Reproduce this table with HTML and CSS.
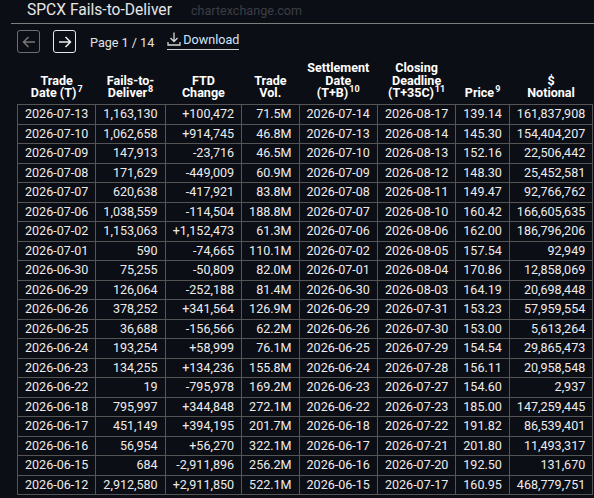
FILE: index.html
```html
<!DOCTYPE html>
<html lang="en">
<head>
    <meta charset="UTF-8">
    <meta name="viewport" content="width=device-width, initial-scale=1.0">
    <title>SPCX Fails-to-Deliver</title>
    <link rel="stylesheet" href="styles.css">
</head>
<body>

    <div class="title-bar">
        <h1>SPCX Fails-to-Deliver</h1>
        <span class="site">chartexchange.com</span>
    </div>

    <div class="toolbar">
        <button class="page-btn disabled">
            <svg width="14" height="12" viewBox="0 0 14 12"><path d="M13 6H1.5M6.5 1L1.5 6l5 5" fill="none" stroke="currentColor" stroke-width="1.5"/></svg>
        </button>
        <button class="page-btn">
            <svg width="14" height="12" viewBox="0 0 14 12"><path d="M1 6h11.5M7.5 1l5 5-5 5" fill="none" stroke="currentColor" stroke-width="1.5"/></svg>
        </button>
        <span class="page-info">Page 1 / 14</span>
        <a href="#" class="download">
            <svg width="14" height="14" viewBox="0 0 14 14"><path d="M7 0.5v9M3.5 6L7 9.5 10.5 6M1 10v3h12v-3" fill="none" stroke="currentColor" stroke-width="1.3"/></svg>Download
        </a>
    </div>

    <table class="ftd-table">
        <thead>
            <tr>
                <th>Trade<br>Date (T)<sup>7</sup></th>
                <th>Fails-to-<br>Deliver<sup>8</sup></th>
                <th>FTD<br>Change</th>
                <th>Trade<br>Vol.</th>
                <th>Settlement<br>Date<br>(T+B)<sup>10</sup></th>
                <th>Closing<br>Deadline<br>(T+35C)<sup>11</sup></th>
                <th>Price<sup>9</sup></th>
                <th>$<br>Notional</th>
            </tr>
        </thead>
        <tbody id="ftdRows"></tbody>
    </table>

    <script>
        const rows = [
            ['2026-07-13', '1,163,130', '+100,472', '71.5M', '2026-07-14', '2026-08-17', '139.14', '161,837,908'],
            ['2026-07-10', '1,062,658', '+914,745', '46.8M', '2026-07-13', '2026-08-14', '145.30', '154,404,207'],
            ['2026-07-09', '147,913', '-23,716', '46.5M', '2026-07-10', '2026-08-13', '152.16', '22,506,442'],
            ['2026-07-08', '171,629', '-449,009', '60.9M', '2026-07-09', '2026-08-12', '148.30', '25,452,581'],
            ['2026-07-07', '620,638', '-417,921', '83.8M', '2026-07-08', '2026-08-11', '149.47', '92,766,762'],
            ['2026-07-06', '1,038,559', '-114,504', '188.8M', '2026-07-07', '2026-08-10', '160.42', '166,605,635'],
            ['2026-07-02', '1,153,063', '+1,152,473', '61.3M', '2026-07-06', '2026-08-06', '162.00', '186,796,206'],
            ['2026-07-01', '590', '-74,665', '110.1M', '2026-07-02', '2026-08-05', '157.54', '92,949'],
            ['2026-06-30', '75,255', '-50,809', '82.0M', '2026-07-01', '2026-08-04', '170.86', '12,858,069'],
            ['2026-06-29', '126,064', '-252,188', '81.4M', '2026-06-30', '2026-08-03', '164.19', '20,698,448'],
            ['2026-06-26', '378,252', '+341,564', '126.9M', '2026-06-29', '2026-07-31', '153.23', '57,959,554'],
            ['2026-06-25', '36,688', '-156,566', '62.2M', '2026-06-26', '2026-07-30', '153.00', '5,613,264'],
            ['2026-06-24', '193,254', '+58,999', '76.1M', '2026-06-25', '2026-07-29', '154.54', '29,865,473'],
            ['2026-06-23', '134,255', '+134,236', '155.8M', '2026-06-24', '2026-07-28', '156.11', '20,958,548'],
            ['2026-06-22', '19', '-795,978', '169.2M', '2026-06-23', '2026-07-27', '154.60', '2,937'],
            ['2026-06-18', '795,997', '+344,848', '272.1M', '2026-06-22', '2026-07-23', '185.00', '147,259,445'],
            ['2026-06-17', '451,149', '+394,195', '201.7M', '2026-06-18', '2026-07-22', '191.82', '86,539,401'],
            ['2026-06-16', '56,954', '+56,270', '322.1M', '2026-06-17', '2026-07-21', '201.80', '11,493,317'],
            ['2026-06-15', '684', '-2,911,896', '256.2M', '2026-06-16', '2026-07-20', '192.50', '131,670'],
            ['2026-06-12', '2,912,580', '+2,911,850', '522.1M', '2026-06-15', '2026-07-17', '160.95', '468,779,751']
        ];

        const body = document.getElementById('ftdRows');
        rows.forEach(r => {
            const tr = document.createElement('tr');
            r.forEach((val, i) => {
                const td = document.createElement('td');
                td.textContent = val;
                // date columns stay left, the rest are numbers
                if (i !== 0 && i !== 4 && i !== 5) td.classList.add('num');
                tr.appendChild(td);
            });
            body.appendChild(tr);
        });
    </script>

</body>
</html>
```

FILE: styles.css
```css
body {
    margin: 0;
    padding: 0;
    background: #0c0e15;
    color: #eeeeee;
    font-family: Roboto, "Liberation Sans", sans-serif;
}

.title-bar {
    display: flex;
    align-items: baseline;
    margin-left: 11px;
    padding-left: 16px;
    height: 23px;
    border-bottom: 1px solid #7d7d7d;
}

.title-bar h1 {
    margin: 0;
    font-size: 15.6px;
    font-weight: normal;
    line-height: 21px;
    color: #e6e6e6;
}

.title-bar .site {
    margin-left: 19px;
    font-size: 12.6px;
    color: #3b3e46;
}

.toolbar {
    display: flex;
    align-items: center;
    gap: 13px;
    padding: 6px 0 0 17px;
    height: 23px;
}

.page-btn {
    width: 23px;
    height: 23px;
    padding: 0;
    display: flex;
    align-items: center;
    justify-content: center;
    background: transparent;
    border: 1px solid #e8e8e8;
    border-radius: 3px;
    color: #eeeeee;
    cursor: pointer;
}

.page-btn.disabled {
    border-color: #6e6e6e;
    color: #777777;
}

.page-info {
    font-size: 12.6px;
    color: #e2e2e2;
    padding-top: 2px;
    margin-left: 1px;
}

.download {
    display: flex;
    align-items: flex-end;
    gap: 2px;
    font-size: 12.6px;
    color: #cfe6ff;
    text-decoration: none;
    border-bottom: 1px solid #cfcfcf;
    padding-bottom: 2px;
    margin-bottom: 1px;
}

.download svg {
    color: #d8d8d8;
    margin-bottom: 1px;
}

.ftd-table {
    margin: 9px 0 0 17px;
    border-collapse: collapse;
    font-size: 12.55px;
}

.ftd-table th {
    font-weight: bold;
    line-height: 12.7px;
    padding: 0 7px 4px;
    text-align: center;
    vertical-align: bottom;
    color: #ffffff;
    white-space: nowrap;
}

.ftd-table th sup {
    font-size: 9px;
    line-height: 0;
    vertical-align: 5px;
    margin-left: 1px;
}

.ftd-table td {
    border: 1px solid #555555;
    padding: 2px 7px;
    line-height: 14.5px;
    white-space: nowrap;
    color: #ececec;
}

.ftd-table td.num {
    text-align: right;
}
```
